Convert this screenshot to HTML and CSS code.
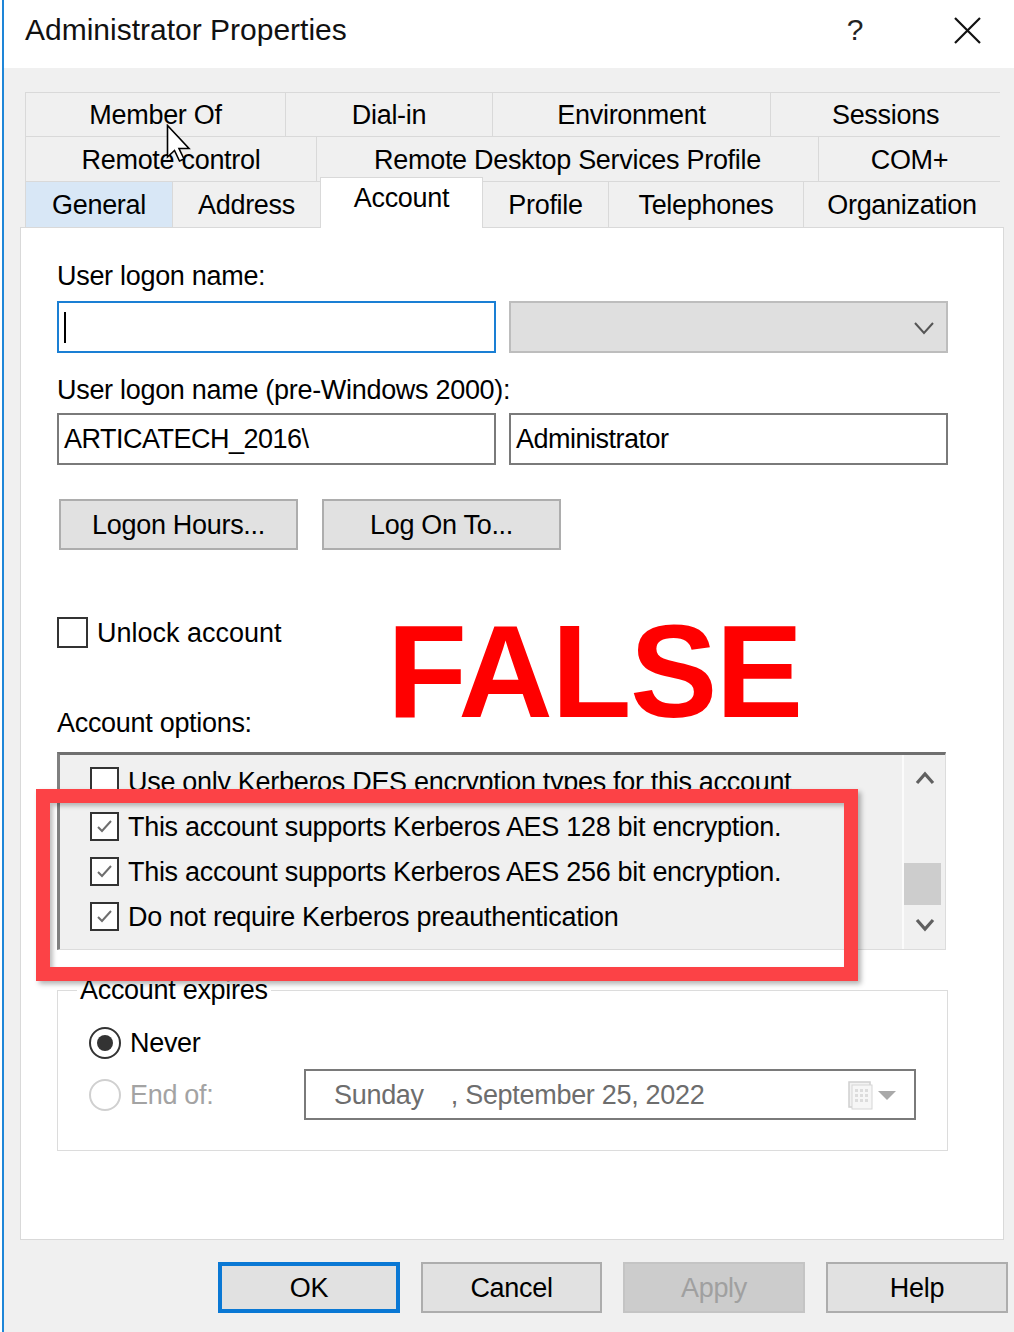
FILE: index.html
```html
<!DOCTYPE html>
<html>
<head>
<meta charset="utf-8">
<title>Administrator Properties</title>
<link rel="stylesheet" href="styles.css">
</head>
<body>
<div class="window">
  <div class="titlebar">
    <div class="title">Administrator Properties</div>
    <div class="tb-help">?</div>
    <svg class="tb-close" width="27" height="27" viewBox="0 0 27 27"><path d="M1 1 L26 26 M26 1 L1 26" stroke="#111" stroke-width="2.2" fill="none"/></svg>
  </div>
  <div class="client">
    <div class="tabs">
      <div class="tabrow row1">
        <div class="tab">Member Of</div>
        <div class="tab">Dial-in</div>
        <div class="tab">Environment</div>
        <div class="tab">Sessions</div>
      </div>
      <div class="tabrow row2">
        <div class="tab">Remote control</div>
        <div class="tab">Remote Desktop Services Profile</div>
        <div class="tab">COM+</div>
      </div>
      <div class="tabrow row3">
        <div class="tab hover">General</div>
        <div class="tab">Address</div>
        <div class="tab selected">Account</div>
        <div class="tab">Profile</div>
        <div class="tab">Telephones</div>
        <div class="tab">Organization</div>
      </div>
    </div>
    <div class="panel">
      <div class="label">User logon name:</div>
      <div class="field-row first">
        <div class="textbox focused"><span class="caret"></span></div>
        <div class="combo">
          <svg class="combo-arrow" width="22" height="14" viewBox="0 0 22 14"><polyline points="2,2 11,12 20,2" fill="none" stroke="#555" stroke-width="2"/></svg>
        </div>
      </div>
      <div class="label second">User logon name (pre-Windows 2000):</div>
      <div class="field-row second">
        <div class="textbox">ARTICATECH_2016\</div>
        <div class="textbox">Administrator</div>
      </div>
      <div class="btn-row">
        <div class="btn">Logon Hours...</div>
        <div class="btn">Log On To...</div>
      </div>
      <div class="check-row unlock">
        <span class="checkbox"></span>
        <span class="check-label">Unlock account</span>
      </div>
      <div class="label options">Account options:</div>
      <div class="listbox">
        <div class="list-items">
          <div class="list-item">
            <span class="checkbox small"></span>
            <span class="check-label">Use only Kerberos DES encryption types for this account</span>
          </div>
          <div class="list-item">
            <span class="checkbox small"><svg width="25" height="25" viewBox="0 0 25 25"><polyline points="6,13 10,17 19,7" fill="none" stroke="#6e6e6e" stroke-width="2"/></svg></span>
            <span class="check-label">This account supports Kerberos AES 128 bit encryption.</span>
          </div>
          <div class="list-item">
            <span class="checkbox small"><svg width="25" height="25" viewBox="0 0 25 25"><polyline points="6,13 10,17 19,7" fill="none" stroke="#6e6e6e" stroke-width="2"/></svg></span>
            <span class="check-label">This account supports Kerberos AES 256 bit encryption.</span>
          </div>
          <div class="list-item">
            <span class="checkbox small"><svg width="25" height="25" viewBox="0 0 25 25"><polyline points="6,13 10,17 19,7" fill="none" stroke="#6e6e6e" stroke-width="2"/></svg></span>
            <span class="check-label">Do not require Kerberos preauthentication</span>
          </div>
        </div>
        <div class="scrollbar">
          <div class="sb-btn"><svg width="20" height="14" viewBox="0 0 20 14"><polyline points="2,12 10,3 18,12" fill="none" stroke="#606060" stroke-width="3.2"/></svg></div>
          <div class="sb-track"><div class="sb-thumb"></div></div>
          <div class="sb-btn down"><svg width="20" height="14" viewBox="0 0 20 14"><polyline points="2,2 10,11 18,2" fill="none" stroke="#606060" stroke-width="3.2"/></svg></div>
        </div>
      </div>
      <fieldset class="group">
        <legend>Account expires</legend>
        <div class="radio-row never">
          <span class="radio checked"><span class="dot"></span></span>
          <span class="radio-label">Never</span>
        </div>
        <div class="radio-row endof">
          <div class="radio-wrap">
            <span class="radio disabled"></span>
            <span class="radio-label disabled">End of:</span>
          </div>
          <div class="datepicker">
            <span class="date-day">Sunday</span>
            <span class="date-rest">, September 25, 2022</span>
            <span class="date-icon">
              <svg width="50" height="30" viewBox="0 0 50 30">
                <rect x="1" y="2" width="21" height="25" fill="#f2f2f2" stroke="#d0d0d0" stroke-width="1.5"/>
                <rect x="4" y="5" width="20" height="24" fill="#f6f6f6" stroke="#d6d6d6" stroke-width="1"/>
                <g fill="#dcdcdc">
                  <rect x="7" y="9" width="3" height="3"/><rect x="12" y="9" width="3" height="3"/><rect x="17" y="9" width="3" height="3"/>
                  <rect x="7" y="14" width="3" height="3"/><rect x="12" y="14" width="3" height="3"/><rect x="17" y="14" width="3" height="3"/>
                  <rect x="7" y="19" width="3" height="3"/><rect x="12" y="19" width="3" height="3"/><rect x="17" y="19" width="3" height="3"/>
                </g>
                <polygon points="30,11 48,11 39,20" fill="#a9a9a9"/>
              </svg>
            </span>
          </div>
        </div>
      </fieldset>
    </div>
    <div class="dialog-buttons">
      <div class="btn default">OK</div>
      <div class="btn narrow">Cancel</div>
      <div class="btn disabled">Apply</div>
      <div class="btn">Help</div>
    </div>
  </div>
</div>
<div class="false-stamp">FALSE</div>
<div class="red-box"></div>
<svg class="cursor" width="28" height="40" viewBox="0 0 28 40">
  <polygon points="1.5,1.5 1.5,33 8.5,26.5 13.5,37 18,35 13,24.5 23,24.5" fill="#fff" stroke="#000" stroke-width="1.6" stroke-linejoin="miter"/>
</svg>
</body>
</html>
```

FILE: styles.css
```css
* { box-sizing: border-box; }

html, body {
  margin: 0;
  padding: 0;
}

body {
  width: 1014px;
  height: 1332px;
  overflow: hidden;
  position: relative;
  background: #ffffff;
  font-family: "Liberation Sans", Arial, sans-serif;
  font-size: 27px;
  letter-spacing: -0.3px;
  line-height: 30px;
  color: #000;
}

.window {
  margin-left: 2px;
  border-left: 2px solid #1e86d8;
  height: 1332px;
  display: flex;
  flex-direction: column;
}

/* Title bar */
.titlebar {
  height: 68px;
  flex: none;
  background: #fff;
  display: flex;
  align-items: flex-start;
  padding: 15px 33px 0 21px;
}

.title {
  flex: 1;
  font-size: 30px;
  letter-spacing: 0;
  line-height: 30px;
  color: #111;
}

.tb-help {
  width: 24px;
  text-align: center;
  font-size: 30px;
  line-height: 30px;
  color: #222;
  margin-right: 87px;
}

.tb-close {
  margin-top: 2px;
}

/* Client area */
.client {
  flex: 1;
  background: #f0f0f0;
  padding-top: 24px;
  display: flex;
  flex-direction: column;
}

.tabs {
  margin: 0 14px 0 21px;
  border-right: 1px solid #d9d9d9;
}

.tabrow {
  display: grid;
}

.row1 { grid-template-columns: 260px 207px 278px 230px; height: 44px; }
.row2 { grid-template-columns: 291px 502px 182px; height: 45px; }
.row3 { grid-template-columns: 147px 148px 162px 126px 195px 197px; height: 46px; }

.tab {
  border-top: 1px solid #d9d9d9;
  border-left: 1px solid #d9d9d9;
  background: #f0f0f0;
  display: flex;
  align-items: center;
  justify-content: center;
  padding-top: 1px;
  white-space: nowrap;
}

.tab.hover {
  background: #d8e7f6;
}

.tab.selected {
  background: #fff;
  margin-top: -4px;
  margin-bottom: -1px;
  border-right: 1px solid #d9d9d9;
  margin-right: -1px;
  position: relative;
  z-index: 2;
  padding-top: 0;
  padding-bottom: 10px;
}

/* Panel */
.panel {
  margin: 0 10px 0 16px;
  height: 1013px;
  flex: none;
  background: #fff;
  border: 1px solid #d9d9d9;
  padding: 33px 0 0 36px;
  position: relative;
  z-index: 1;
}

.label {
  height: 30px;
  white-space: nowrap;
}

.label.second { margin-top: 22px; }
.label.options { margin-top: 60px; }

.field-row {
  display: flex;
  gap: 13px;
}

.field-row.first { margin-top: 10px; }
.field-row.second { margin-top: 8px; }

.textbox {
  width: 439px;
  height: 52px;
  border: 2px solid #7a7a7a;
  background: #fff;
  padding: 9px 0 0 5px;
  white-space: nowrap;
  letter-spacing: -0.5px;
}

.textbox.focused {
  border-color: #1a7fd4;
}

.caret {
  display: block;
  width: 2px;
  height: 31px;
  background: #000;
}

.combo {
  width: 439px;
  height: 52px;
  border: 2px solid #bdbdbd;
  background: #dfdfdf;
  display: flex;
  align-items: center;
  justify-content: flex-end;
  padding-right: 11px;
}

.combo-arrow { margin-top: 2px; }

.btn-row {
  display: flex;
  gap: 24px;
  margin: 34px 0 0 2px;
}

.btn {
  width: 239px;
  height: 51px;
  background: #e1e1e1;
  border: 2px solid #adadad;
  display: flex;
  align-items: center;
  justify-content: center;
  white-space: nowrap;
}

.check-row {
  display: flex;
  align-items: center;
}

.check-row.unlock { margin-top: 67px; height: 31px; }

.checkbox {
  width: 31px;
  height: 31px;
  border: 2px solid #333;
  background: #fff;
  flex: none;
  display: flex;
  align-items: center;
  justify-content: center;
}

.checkbox.small {
  width: 29px;
  height: 29px;
}

.check-label {
  margin-left: 9px;
  white-space: nowrap;
}

.unlock .check-label { letter-spacing: 0; }

/* List box */
.listbox {
  margin-top: 14px;
  width: 889px;
  height: 198px;
  border-top: 3px solid #6f6f6f;
  border-left: 3px solid #808080;
  border-right: 1px solid #dcdcdc;
  border-bottom: 1px solid #dcdcdc;
  background: #f0f0f0;
  display: flex;
}

.list-items {
  flex: 1;
  overflow: hidden;
  padding: 4px 0 0 30px;
}

.list-item {
  height: 45px;
  display: flex;
  align-items: center;
}

.scrollbar {
  width: 43px;
  border-left: 2px solid #fbfbfb;
  display: flex;
  flex-direction: column;
}

.sb-btn {
  height: 45px;
  display: flex;
  align-items: center;
  justify-content: center;
}

.sb-btn.down { height: 44px; padding-bottom: 4px; }

.sb-track {
  flex: 1;
  display: flex;
  flex-direction: column;
  justify-content: flex-end;
}

.sb-thumb {
  width: 37px;
  height: 42px;
  background: #cdcdcd;
}

/* Group box */
.group {
  margin: 25px 0 0 0;
  width: 891px;
  border: 1px solid #dcdcdc;
  padding: 0 0 30px 31px;
  min-inline-size: 0;
}

.group legend {
  margin-left: -12px;
  padding: 0 3px;
  line-height: 30px;
  height: 30px;
}

.radio-row {
  display: flex;
  align-items: center;
}

.radio-row.never { margin-top: 22px; height: 32px; }
.radio-row.endof { margin-top: 10px; height: 51px; }

.radio-wrap {
  width: 215px;
  display: flex;
  align-items: center;
}

.radio {
  width: 32px;
  height: 32px;
  border-radius: 50%;
  border: 2px solid #333;
  background: #fff;
  flex: none;
  display: flex;
  align-items: center;
  justify-content: center;
}

.radio .dot {
  width: 16px;
  height: 16px;
  border-radius: 50%;
  background: #333;
}

.radio.disabled {
  border-color: #d0d0d0;
}

.radio-label {
  margin-left: 9px;
}

.radio-label.disabled {
  color: #a3a3a3;
}

.datepicker {
  width: 612px;
  height: 51px;
  border: 2px solid #7a7a7a;
  background: #fff;
  display: flex;
  align-items: center;
  padding-left: 28px;
  color: #6d6d6d;
  white-space: nowrap;
}

.date-rest { margin-left: 27px; }

.date-icon {
  margin-left: auto;
  margin-right: 16px;
  height: 30px;
  display: flex;
}

/* Dialog buttons */
.dialog-buttons {
  display: flex;
  justify-content: flex-end;
  gap: 21px;
  margin-top: 22px;
  padding-right: 6px;
}

.dialog-buttons .btn {
  width: 182px;
}

.dialog-buttons .btn.narrow { width: 181px; }

.btn.default {
  border: 4px solid #0a78d4;
}

.btn.disabled {
  background: #cccccc;
  border-color: #c4c4c4;
  color: #a0a0a0;
}

/* Overlays (annotation on top of the screenshot) */
.false-stamp {
  position: absolute;
  left: 387px;
  top: 606px;
  font-family: "Liberation Sans", Arial, sans-serif;
  font-weight: bold;
  font-size: 131px;
  line-height: 131px;
  letter-spacing: -1.5px;
  color: #ff0000;
  z-index: 5;
}

.red-box {
  position: absolute;
  left: 36px;
  top: 789px;
  width: 822px;
  height: 192px;
  border: 14px solid #fc4246;
  box-shadow: 3px 3px 5px rgba(0, 0, 0, 0.3), inset 3px 3px 4px rgba(0, 0, 0, 0.25);
  z-index: 5;
}

.cursor {
  position: absolute;
  left: 166px;
  top: 124px;
  z-index: 6;
}
```
